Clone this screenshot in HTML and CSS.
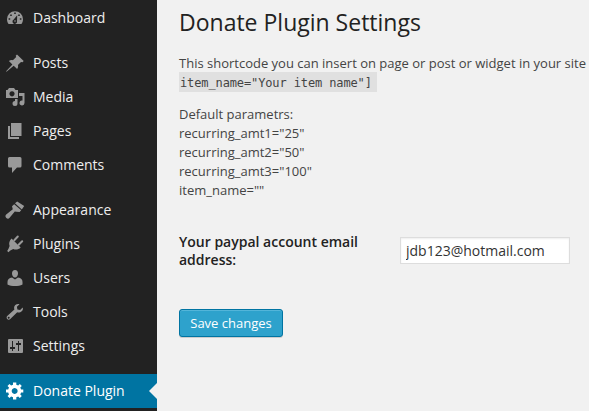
FILE: index.html
```html
<!DOCTYPE html>
<html lang="en">
<head>
<meta charset="utf-8">
<title>Donate Plugin Settings</title>
<link rel="stylesheet" href="styles.css">
</head>
<body>
<div class="layout">
  <nav class="menu">
    <a class="item"><svg class="icon" viewBox="0 0 20 20"><path fill-rule="evenodd" d="M3.600 16C2.500 14.700 2 13.100 2 11.200a8 8 0 0 1 16 0c0 1.900-.5 3.500-1.600 4.800zM9.200 4.500v1.600h1.600V4.500zM5.200 6.400V8h1.600V6.400zM13.200 6.400V8h1.600V6.400zM3.600 10.200v1.600h1.600v-1.600zM14.800 10.200v1.600h1.600v-1.600zM12.200 7.200L8.700 11.500a2.300 2.300 0 1 0 3.300 1.500z"/><circle cx="10" cy="13" r=".8"/></svg>Dashboard</a>
    <div class="separator"></div>
    <a class="item"><svg class="icon" viewBox="0 0 20 20"><path d="M12 1.500L18.700 8l-1.200 1.200-1.500-.3-3.100 3.200c.5 1.400.2 2.800-.8 3.900L8.700 12.700 1.500 18.700l-.4-.4L7.400 11.500 3.900 8.100c1.200-1 2.700-1.300 4-.8l3.300-3.200-.5-1.400z"/></svg>Posts</a>
    <a class="item"><svg class="icon" viewBox="0 0 20 20"><path fill-rule="evenodd" d="M1 3h1.500L4 1h5l1.500 2H13v8H1zM7 4.200a2.600 2.600 0 1 0 .01 0z"/><path d="M14 6h5.500v10a2.500 2.500 0 1 1-2-2.500V9H14zM10 12h2.500v4.500A2.500 2.500 0 1 1 10 14z"/></svg>Media</a>
    <a class="item"><svg class="icon" viewBox="0 0 20 20"><path d="M6 2h10.500v13H6zM3 5h2v11h9v2H3z"/></svg>Pages</a>
    <a class="item"><svg class="icon" viewBox="0 0 20 20"><path d="M4.500 2h10.500Q16.500 2 16.500 3.500v7.500Q16.500 12.500 15 12.500h-3L7 18v-5.500H4.500Q3 12.500 3 11V3.500Q3 2 4.500 2z"/></svg>Comments</a>
    <div class="separator"></div>
    <a class="item"><svg class="icon" viewBox="0 0 20 20"><path d="M10 3.300L12.200 1.500l7 4.500-2.400 3.600zM9.200 4.200l7 6-1.600 1.800-3.300-.2-1.500-.4L4.600 17.800a2.200 2.200 0 0 1-3.400-3.200L7.800 9.200 7 6.300z"/></svg>Appearance</a>
    <a class="item"><svg class="icon" viewBox="0 0 20 20"><path d="M6.500 4.500l9.200 9c-2 2-4.900 2.700-7.500 1.600L5.300 16.500 3.400 18.200 2.200 17l1.300-2.200L4.600 12c-1-2.400-.3-5.300 1.900-7.500z"/><path class="prongs" d="M9.300 6.200l3.500-3.700M13.700 10.800L17.200 7.200"/></svg>Plugins</a>
    <a class="item"><svg class="icon" viewBox="0 0 20 20"><path d="M10 2c2 0 3 1.500 3 3.500S11.700 9.500 10 9.500 7 7.500 7 5.500 8 2 10 2zM7 9.500l3 2 3-2c3 .2 4.500 2 4.500 4.500v2.500c-4 2-11 2-15 0V14c0-2.500 1.500-4.300 4.500-4.500z"/></svg>Users</a>
    <a class="item"><svg class="icon" viewBox="0 0 20 20"><path fill-rule="evenodd" d="M16.700 9.300c-1.200 1.200-3 1.500-4.500 1L5.300 17c-.9.900-2.300.9-3.100 0s-.8-2.200 0-3L9.400 7.500c-.6-1.500-.3-3.200.9-4.400 1.200-1.100 2.800-1.400 4.200-.9l-2.600 2.600.5 2.700 2.700.5 2.600-2.600c.5 1.400.2 2.800-1 3.900zM3.700 14.800a.9.900 0 1 0 .01 0z"/></svg>Tools</a>
    <a class="item"><svg class="icon" viewBox="0 0 20 20"><path fill-rule="evenodd" d="M4 3h13q1 0 1 1v12q0 1-1 1H4q-1 0-1-1V4q0-1 1-1zM7 5v6H5v2h2v2h1v-2h2v-2H8V5zM13 5v2h-2v2h2v6h1V9h2V7h-2V5z"/></svg>Settings</a>
    <div class="separator"></div>
    <a class="item active"><svg class="icon" viewBox="0 0 20 20"><path fill-rule="evenodd" d="M18.300 11.500h-2.200l-.8 1.900 1.500 1.600-2 2-1.600-1.500-1.900.8v2.200H8v-2.200l-1.900-.8L4.500 17l-2-2L4 13.400l-.8-1.900H1v-3h2.200L4 6.600 2.500 5l2-2 1.600 1.500L8 3.700V1.500h3.300v2.200l1.900.8L14.800 3l2 2-1.500 1.600.8 1.900h2.200zM9.650 7a3 3 0 1 0 .01 0z"/></svg>Donate Plugin</a>
  </nav>
  <main class="content">
    <h1>Donate Plugin Settings</h1>
    <p class="intro">This shortcode you can insert on page or post or widget in your site<br><code>item_name="Your item name"] </code></p>
    <p class="defaults">Default parametrs:<br>recurring_amt1="25"<br>recurring_amt2="50"<br>recurring_amt3="100"<br>item_name=""</p>
    <form class="form">
      <div class="row">
        <label for="email">Your paypal account email address:</label>
        <input id="email" type="text" value="jdb123@hotmail.com">
      </div>
      <button type="button">Save changes</button>
    </form>
  </main>
</div>
</body>
</html>
```
FILE: styles.css
```css
* { box-sizing: border-box; }
body {
  margin: 0;
  overflow: hidden;
  background: #f1f1f1;
  color: #444;
  font: 13px/19px "Open Sans", sans-serif;
}
.layout { display: flex; height: 411px; }
.menu {
  flex: 0 0 157px;
  padding-top: 1px;
  background: #222;
}
.item {
  position: relative;
  display: flex;
  align-items: center;
  gap: 8px;
  height: 34px;
  padding-left: 5px;
  color: #eee;
  font-size: 14px;
  line-height: 18px;
  white-space: nowrap;
}
.icon { width: 20px; height: 20px; flex: none; fill: #999; }
.prongs { fill: none; stroke: #999; stroke-width: 2; stroke-linecap: round; }
.separator { height: 11px; }
.active { background: #0074a2; color: #fff; }
.active .icon { fill: #fff; }
.active::after {
  content: "";
  position: absolute;
  right: 0;
  top: 9px;
  border: 8px solid transparent;
  border-left: 0;
  border-right-color: #f1f1f1;
}
.content { flex: 1; min-width: 0; padding: 8px 0 0 22px; }
h1 {
  margin: 0;
  color: #222;
  font-size: 23px;
  font-weight: 400;
  line-height: 29px;
}
p { margin: 0; white-space: nowrap; }
.intro { margin-top: 17px; }
code {
  display: inline-block;
  width: 198px;
  height: 20px;
  margin-top: -1px;
  padding: 2px 0 0 1px;
  background: #e0e0e0;
  font: 12px/18px "DejaVu Sans Mono", monospace;
  letter-spacing: -.12px;
  white-space: pre;
  vertical-align: top;
}
.defaults { margin-top: 13px; }
.row { display: flex; margin-top: 33px; }
label {
  width: 221px;
  padding-right: 30px;
  color: #222;
  font-size: 14px;
  font-weight: 600;
  line-height: 18px;
}
input {
  width: 170px;
  height: 27px;
  margin-top: 4px;
  padding: 0 5px;
  border: 1px solid #ddd;
  background: #fff;
  color: #333;
  font: 14px "Open Sans", sans-serif;
  box-shadow: inset 0 1px 2px rgba(0, 0, 0, .07);
}
button {
  display: block;
  width: 104px;
  height: 28px;
  margin-top: 40px;
  padding: 0;
  border: 1px solid #0074a2;
  border-radius: 3px;
  background: #2ea2cc;
  box-shadow: inset 0 1px 0 rgba(120, 200, 230, .5), 0 1px 0 rgba(0, 0, 0, .15);
  color: #fff;
  font: 13px/26px "Open Sans", sans-serif;
}
```
